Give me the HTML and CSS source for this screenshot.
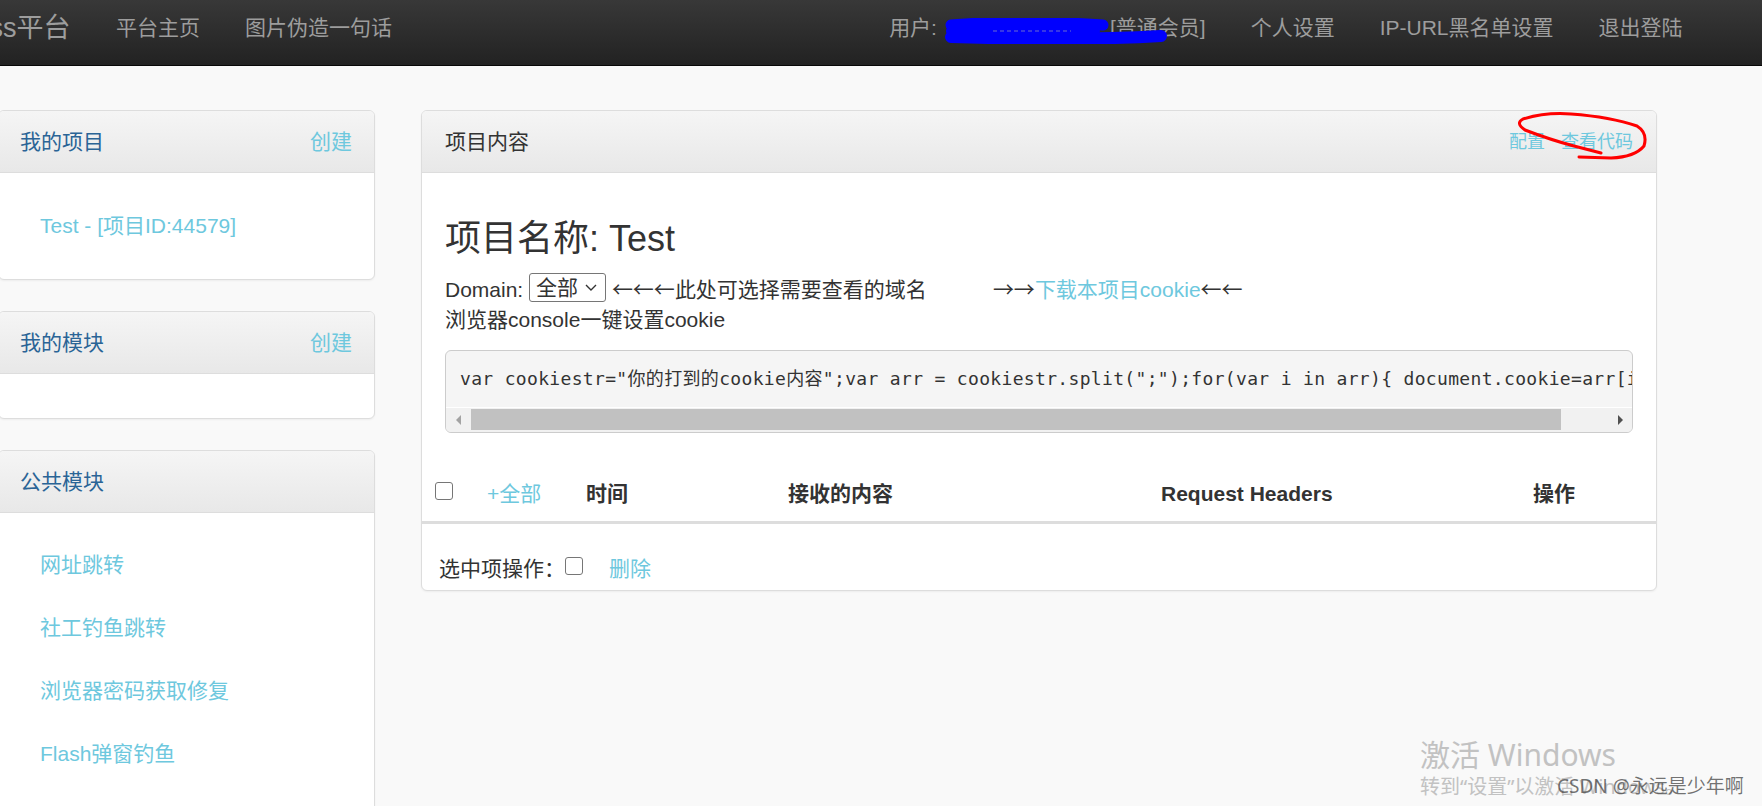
FILE: index.html
```html
<!DOCTYPE html>
<html lang="zh-CN">
<head>
<meta charset="utf-8">
<title>xss平台 - 项目内容</title>
<link rel="stylesheet" href="styles.css">
</head>
<body>
<header class="navbar">
  <a class="brand">xss平台</a>
  <ul class="nav">
    <li><a>平台主页</a></li>
    <li><a>图片伪造一句话</a></li>
  </ul>
  <ul class="nav nav-right">
    <li class="user">
      <span>用户:</span><span class="uname"></span><span>[普通会员]</span>
      <svg class="scribble" viewBox="0 0 224 26" width="224" height="26">
        <path d="M6,7 C50,3 120,4 158,7" stroke="#0000fe" stroke-width="11" fill="none" stroke-linecap="round"/>
        <path d="M6,13 L150,13" stroke="#0000fe" stroke-width="10" fill="none" stroke-linecap="round"/>
        <path d="M6,19 C70,21 150,22 216,18" stroke="#0000fe" stroke-width="12" fill="none" stroke-linecap="round"/>
        <path d="M48,13 L126,13" stroke="#6a6ad0" stroke-width="1" stroke-dasharray="4 3" fill="none"/>
      </svg>
    </li>
    <li><a>个人设置</a></li>
    <li><a>IP-URL黑名单设置</a></li>
    <li><a>退出登陆</a></li>
  </ul>
</header>

<div class="layout">
  <aside class="sidebar">
    <section class="panel">
      <div class="panel-heading side-heading"><span class="side-title">我的项目</span><a class="link">创建</a></div>
      <ul class="panel-list">
        <li><a class="link">Test - [项目ID:44579]</a></li>
      </ul>
    </section>
    <section class="panel">
      <div class="panel-heading side-heading"><span class="side-title">我的模块</span><a class="link">创建</a></div>
      <div class="panel-empty"></div>
    </section>
    <section class="panel">
      <div class="panel-heading side-heading"><span class="side-title">公共模块</span></div>
      <ul class="panel-list panel-list-long">
        <li><a class="link">网址跳转</a></li>
        <li><a class="link">社工钓鱼跳转</a></li>
        <li><a class="link">浏览器密码获取修复</a></li>
        <li><a class="link">Flash弹窗钓鱼</a></li>
      </ul>
    </section>
  </aside>

  <main class="main">
    <section class="panel main-panel">
      <div class="panel-heading main-heading">
        <span>项目内容</span>
        <span class="actions"><a class="link">配置</a><a class="link">查看代码</a></span>
      </div>
      <svg class="annot" viewBox="0 0 145 57" width="145" height="57">
        <path d="M90,44 L63,37 Q40,31 14,21 Q4,14 12,10 Q35,3 60,5 Q100,8 126,17 Q137,24 133,37 Q124,48 100,49 L68,48" stroke="#ff0000" stroke-width="3" fill="none" stroke-linecap="round" stroke-linejoin="round"/>
      </svg>
      <div class="panel-body">
        <h2>项目名称: Test</h2>
        <p>Domain: <span class="select">全部<svg class="chev" viewBox="0 0 12 8" width="12" height="8"><path d="M1,1 L6,6 L11,1" stroke="#333" stroke-width="1.4" fill="none"/></svg></span> <span class="arr">←←←</span>此处可选择需要查看的域名<span class="gap"></span><span class="arr">→→</span><a class="link">下载本项目cookie</a><span class="arr">←←</span></p>
        <p>浏览器console一键设置cookie</p>
        <div class="code">
          <pre>var cookiestr="你的打到的cookie内容";var arr = cookiestr.split(";");for(var i in arr){ document.cookie=arr[i]; }</pre>
          <div class="hscroll">
            <span class="sb-btn"><span class="tri-left"></span></span>
            <span class="track"><span class="thumb"></span></span>
            <span class="sb-btn"><span class="tri-right"></span></span>
          </div>
        </div>
      </div>
      <div class="thead">
        <div class="th th-first"><input type="checkbox" class="cb cb-head"><a class="link all">+全部</a></div>
        <div class="th">时间</div>
        <div class="th">接收的内容</div>
        <div class="th">Request Headers</div>
        <div class="th">操作</div>
      </div>
      <div class="tfoot">
        <span>选中项操作：</span><input type="checkbox" class="cb"><a class="link del">删除</a>
      </div>
    </section>
  </main>
</div>

<div class="activate">
  <div class="act-1">激活 Windows</div>
  <div class="act-2">转到“设置”以激活 Windows。</div>
</div>
<div class="csdn">CSDN @永远是少年啊</div>
</body>
</html>
```

FILE: styles.css
```css
* { box-sizing: border-box; }

html, body {
  margin: 0;
  padding: 0;
  overflow: hidden;
}

body {
  position: relative;
  width: 1762px;
  height: 806px;
  background: #f9f9f9;
  color: #333;
  font-family: "Liberation Sans", Arial, "Noto Sans CJK SC", sans-serif;
  font-size: 21px;
  line-height: 30px;
}

a { text-decoration: none; cursor: pointer; }

.link { color: #6ec8de; }

/* navbar */
.navbar {
  display: flex;
  align-items: flex-start;
  height: 66px;
  padding-top: 13px;
  padding-right: 57px;
  background: linear-gradient(#383838, #222222);
  border-bottom: 1px solid #080808;
  color: #9d9d9d;
}

.brand {
  flex: none;
  margin-left: -24px;
  padding-right: 23px;
  font-size: 27px;
  line-height: 30px;
  color: #9d9d9d;
}

.nav {
  display: flex;
  margin: 0;
  padding: 0;
  list-style: none;
}

.nav li {
  padding: 0 22.5px;
  white-space: nowrap;
}

.nav a { color: #9d9d9d; }

.nav-right { margin-left: auto; }

.user { position: relative; }

.uname {
  display: inline-block;
  width: 173px;
}

.scribble {
  position: absolute;
  left: 78px;
  top: 5px;
}

/* layout */
.layout {
  display: flex;
  align-items: flex-start;
  gap: 46px;
  margin-left: -2px;
  padding-top: 44px;
}

.sidebar {
  flex: none;
  width: 377px;
}

.main {
  flex: none;
  width: 1236px;
}

.panel {
  background: #fff;
  border: 1px solid #ddd;
  border-radius: 6px;
  margin-bottom: 31px;
  box-shadow: 0 1px 2px rgba(0, 0, 0, 0.05);
}

.panel-heading {
  display: flex;
  justify-content: space-between;
  align-items: center;
  height: 62px;
  padding: 0 22px 0 21px;
  background: linear-gradient(#f5f5f5, #e8e8e8);
  border-bottom: 1px solid #ddd;
  border-radius: 5px 5px 0 0;
}

.side-title { color: #2a6496; }

.panel-list {
  list-style: none;
  margin: 0;
  padding: 22px 0 21px;
}

.panel-list li {
  padding: 16px 20px 17px 41px;
}

.panel-list-long {
  padding-top: 21px;
  padding-bottom: 140px;
}

.panel-empty { height: 44px; }

/* main panel */
.main-panel { position: relative; }

.main-heading {
  padding: 0 23px 0 23px;
}

.actions {
  display: flex;
  gap: 16px;
  font-size: 18px;
}

.annot {
  position: absolute;
  left: 1089px;
  top: -2px;
}

.panel-body {
  padding: 22px 23px 19px 23px;
}

h2 {
  margin: 24px 0 14px;
  font-size: 36px;
  line-height: 40px;
  font-weight: normal;
}

p { margin: 0; white-space: nowrap; }

.select {
  display: inline-flex;
  align-items: center;
  vertical-align: top;
  height: 29px;
  padding: 0 8px 0 6px;
  border: 1px solid #767676;
  border-radius: 3px;
  background: #fff;
  line-height: 27px;
}

.chev { margin-left: 7px; }

.arr {
  font-family: "Noto Sans CJK SC", sans-serif;
}

.gap {
  display: inline-block;
  width: 66px;
}

.code {
  margin: 15px 0;
  border: 1px solid #ccc;
  border-radius: 6px;
  background: #f5f5f5;
  overflow: hidden;
}

.code pre {
  margin: 0;
  padding: 13px 14px;
  height: 56px;
  overflow: hidden;
  white-space: pre;
  font-family: "DejaVu Sans Mono", "Noto Sans CJK SC", monospace;
  font-size: 18px;
  line-height: 30px;
  letter-spacing: 0.33px;
  color: #333;
}

.hscroll {
  display: flex;
  height: 25px;
  border-top: 1px solid #fff;
  background: #f1f1f1;
}

.sb-btn {
  flex: none;
  width: 24px;
  display: flex;
  align-items: center;
  justify-content: center;
}

.tri-left {
  width: 0;
  height: 0;
  border-top: 5px solid transparent;
  border-bottom: 5px solid transparent;
  border-right: 5px solid #a3a3a3;
}

.tri-right {
  width: 0;
  height: 0;
  border-top: 5px solid transparent;
  border-bottom: 5px solid transparent;
  border-left: 5px solid #505050;
}

.track {
  flex: 1;
  display: flex;
  align-items: flex-start;
  padding-top: 1px;
}

.thumb {
  display: block;
  width: 1090px;
  height: 21px;
  margin-left: 1px;
  background: #c1c1c1;
}

/* table */
.thead {
  display: grid;
  grid-template-columns: 152px 202px 373px 372px 1fr;
  align-items: center;
  height: 57px;
  border-bottom: 3px solid #ddd;
  font-weight: bold;
}

.th {
  padding-left: 12px;
  white-space: nowrap;
}

.th-first {
  display: flex;
  align-items: center;
  padding-left: 13px;
  font-weight: normal;
}

.cb {
  appearance: none;
  -webkit-appearance: none;
  flex: none;
  width: 18px;
  height: 18px;
  margin: 0;
  border: 1.5px solid #767676;
  border-radius: 3px;
  background: #fff;
}

.cb-head { margin-bottom: 6px; }

.all { margin-left: 34px; }

.tfoot {
  display: flex;
  align-items: center;
  padding: 30px 17px 6px;
}

.tfoot .cb { margin-bottom: 7px; }

.del { margin-left: 26px; }

/* overlays */
.activate {
  position: absolute;
  left: 1420px;
  top: 737px;
  color: #c2c2c2;
  font-family: "Noto Sans", "Noto Sans CJK SC", sans-serif;
}

.act-1 {
  font-size: 30px;
  line-height: 36px;
}

.act-2 {
  font-size: 20px;
  line-height: 28px;
}

.csdn {
  position: absolute;
  left: 1557px;
  top: 773px;
  font-family: "Noto Sans", "Noto Sans CJK SC", sans-serif;
  font-size: 19px;
  line-height: 26px;
  color: rgba(70, 70, 70, 0.75);
  white-space: nowrap;
}
```
